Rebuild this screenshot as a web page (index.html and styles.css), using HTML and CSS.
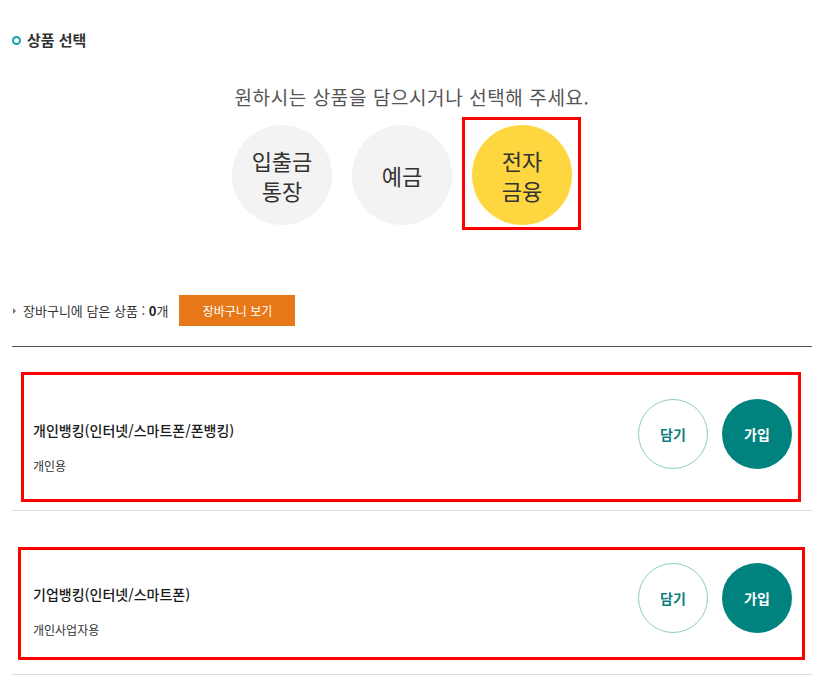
FILE: index.html
```html
<!DOCTYPE html>
<html lang="ko">
<head>
<meta charset="utf-8">
<title>상품 선택</title>
<link rel="stylesheet" href="styles.css">
</head>
<body>
<div class="page">
  <h2 class="section-title"><span class="ring"></span>상품 선택</h2>
  <p class="guide">원하시는 상품을 담으시거나 선택해 주세요.</p>
  <ul class="cats">
    <li class="cat">입출금<br>통장</li>
    <li class="cat">예금</li>
    <li class="cat cat--on">전자<br>금융</li>
  </ul>
  <div class="cart">
    <span class="bullet"></span>
    <span class="cart-text">장바구니에 담은 상품 : <b>0</b>개</span>
    <button class="cart-btn">장바구니 보기</button>
  </div>
  <ul class="products">
    <li class="product product--a">
      <div class="info">
        <p class="name">개인뱅킹(인터넷/스마트폰/폰뱅킹)</p>
        <p class="desc">개인용</p>
      </div>
      <div class="actions">
        <button class="act act--put">담기</button>
        <button class="act act--join">가입</button>
      </div>
    </li>
    <li class="product product--b">
      <div class="info">
        <p class="name">기업뱅킹(인터넷/스마트폰)</p>
        <p class="desc">개인사업자용</p>
      </div>
      <div class="actions">
        <button class="act act--put">담기</button>
        <button class="act act--join">가입</button>
      </div>
    </li>
  </ul>
</div>
</body>
</html>
```
FILE: styles.css
```css
* { box-sizing: border-box; }
html, body { margin: 0; padding: 0; background: #fff; }
body {
  font-family: "Noto Sans CJK KR", "Noto Sans", sans-serif;
  color: #333;
}
.page { width: 824px; padding: 0 12px; }
p, ul, h2 { margin: 0; padding: 0; }
ul { list-style: none; }
button { font-family: inherit; border: 0; cursor: pointer; padding: 0; }

.section-title {
  margin-top: 30px;
  height: 20px;
  line-height: 20px;
  font-size: 15px;
  font-weight: 700;
  color: #333;
  display: flex;
  align-items: center;
}
.ring {
  width: 9px; height: 9px;
  border: 2px solid #15a5a5;
  border-radius: 50%;
  margin-right: 6px;
}
.guide {
  margin-top: 34px;
  line-height: 26px;
  font-size: 19px;
  letter-spacing: 0.6px;
  color: #555;
  text-align: center;
}
.cats {
  margin-top: 15px;
  display: flex;
  justify-content: center;
}
.cat {
  width: 100px; height: 100px;
  margin-right: 20px;
  border-radius: 50%;
  background: #f3f3f3;
  display: flex;
  align-items: center;
  justify-content: center;
  text-align: center;
  font-size: 22px;
  line-height: 30px;
  color: #333;
  position: relative;
}
.cat--on { background: #fed63f; }
.cat--on::after {
  content: "";
  position: absolute;
  top: -8px; left: -10px; right: -9px; bottom: -5px;
  border: 3px solid #ff0000;
}
.cart {
  margin-top: 70px;
  height: 31px;
  display: flex;
  align-items: center;
}
.bullet {
  width: 0; height: 0;
  border-top: 3px solid transparent;
  border-bottom: 3px solid transparent;
  border-left: 3px solid #777;
  margin: 0 7px 0 1px;
}
.cart-text { font-size: 13px; color: #333; }
.cart-text b { font-weight: 700; color: #222; }
.cart-btn {
  margin-left: 11px;
  width: 116px; height: 31px;
  background: #e77818;
  color: #fff;
  font-size: 12px;
}
.products {
  margin-top: 20px;
  border-top: 1px solid #4d4d4d;
}
.product {
  position: relative;
  height: 164px;
  display: flex;
  justify-content: space-between;
  align-items: flex-start;
  padding: 52px 20px 0 21px;
  border-bottom: 1px solid #dddddd;
}
.product::after {
  content: "";
  position: absolute;
  border: 3px solid #ff0000;
  pointer-events: none;
}
.product--a::after { top: 25px; bottom: 8px; left: 9px; right: 11px; }
.product--b::after { top: 36px; bottom: 14px; left: 6px; right: 7px; }
.info { padding-top: 21px; }
.name {
  font-size: 14px;
  line-height: 20px;
  font-weight: 500;
  color: #1a1a1a;
}
.desc {
  margin-top: 17px;
  font-size: 12px;
  line-height: 18px;
  color: #333;
}
.actions { display: flex; gap: 14px; }
.act {
  width: 70px; height: 70px;
  border-radius: 50%;
  font-size: 14px;
  font-weight: 700;
}
.act--put { background: #fff; border: 1px solid #8ecac7; color: #0d7f7c; }
.act--join { background: #00837f; color: #fff; }
```
